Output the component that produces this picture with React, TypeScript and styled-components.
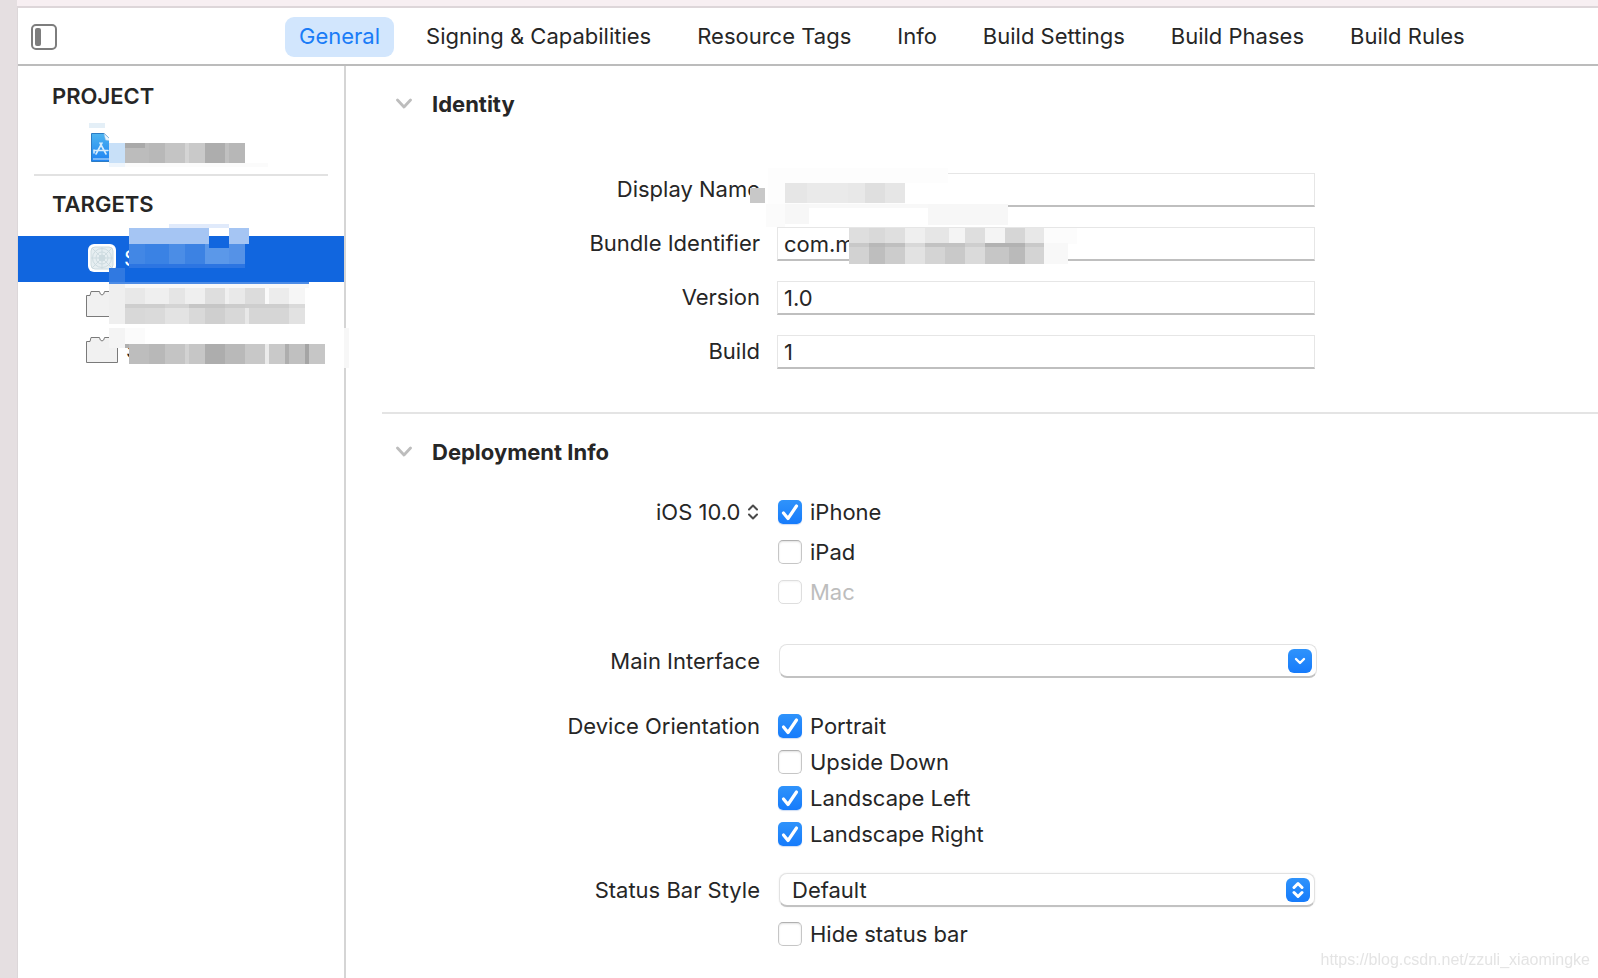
import React, { useState } from 'react';
import styled, { createGlobalStyle } from 'styled-components';

const GlobalStyle = createGlobalStyle`
  * { box-sizing: border-box; }
  body { margin: 0; background: #fff; }
  body, button, input, select {
    font-family: Inter, "Liberation Sans", sans-serif;
    font-size: 22px;
    line-height: 28px;
    color: #262626;
  }
`;

const Frame = styled.div`
  display: flex;
  flex-direction: column;
  min-height: 100vh;
  background: linear-gradient(to right, #e5dfe1 17px, #f7eff2 17px);
  padding: 6px 0 0 17px;
`;

const Window = styled.div`
  flex: 1;
  display: flex;
  flex-direction: column;
  background: #fff;
  border-top: 2px solid #ddd6d9;
  border-left: 1px solid #dcd7d9;
`;

const Toolbar = styled.header`
  display: flex;
  align-items: center;
  height: 58px;
  padding: 2px 13px 0;
  border-bottom: 2px solid #bcbcbc;
`;

const SidebarToggle = styled.button`
  display: flex;
  padding: 0;
  border: 0;
  background: none;
`;

const Tabs = styled.nav`
  display: flex;
  gap: 18px;
  margin-left: 228px;
`;

const Tab = styled.button<{ $active?: boolean }>`
  height: 40px;
  padding: 0 14px 2px;
  border: 0;
  border-radius: 9px;
  white-space: nowrap;
  background: ${p => (p.$active ? '#d2e6fd' : 'transparent')};
  color: ${p => (p.$active ? '#1a7cf7' : '#262626')};
`;

const Body = styled.div`
  flex: 1;
  display: flex;
`;

const Sidebar = styled.aside`
  position: relative;
  flex: none;
  width: 328px;
  padding-top: 16px;
  border-right: 2px solid #d5d5d5;
`;

const GroupTitle = styled.h2`
  margin: 0;
  padding-left: 34px;
  font-size: 22px;
  line-height: 28px;
  font-weight: 600;
`;

const ItemList = styled.ul`
  margin: 0;
  padding: 0;
  list-style: none;
`;

const Item = styled.li<{ $selected?: boolean }>`
  display: flex;
  align-items: center;
  gap: 8px;
  height: 46px;
  padding: 0 0 2px 68px;
  background: ${p => (p.$selected ? '#1166df' : 'transparent')};
  color: ${p => (p.$selected ? '#fff' : '#262626')};
`;

const ProjectGroup = styled.section`
  margin: 0 16px 14px;
  height: 94px;
  border-bottom: 2px solid #e2e2e2;
  ${GroupTitle} { padding-left: 18px; }
  ${Item} { padding: 20px 0 0 52px; height: 56px; }
`;

const TargetGroup = styled.section`
  ${ItemList} { margin-top: 18px; }
`;

const Overlay = styled.svg`
  position: absolute;
  top: 0;
  left: 0;
  overflow: visible;
  pointer-events: none;
`;

const Content = styled.main`
  flex: 1;
  min-width: 0;
`;

const Section = styled.section<{ $divided?: boolean }>`
  margin-left: 36px;
  padding-top: 24px;
  border-top: ${p => (p.$divided ? '2px solid #e4e4e4' : '0')};
`;

const SectionTitle = styled.h2`
  display: flex;
  align-items: center;
  gap: 20px;
  margin: 0;
  padding-left: 14px;
  font-size: 22px;
  line-height: 28px;
  font-weight: 700;
`;

const Disclosure = styled.button`
  display: flex;
  padding: 0;
  border: 0;
  background: none;
`;

const Fields = styled.div`
  position: relative;
  display: flex;
  flex-direction: column;
  gap: 20px;
  margin: 55px 0 43px;
`;

const Row = styled.div`
  display: grid;
  grid-template-columns: 378px minmax(200px, 538px);
  column-gap: 17px;
  align-items: start;
`;

const Label = styled.label<{ $framed?: boolean }>`
  justify-self: end;
  line-height: ${p => (p.$framed ? 32 : 34)}px;
  white-space: nowrap;
`;

const GroupLabel = styled.span`
  justify-self: end;
  line-height: 24px;
  white-space: nowrap;
`;

const TextField = styled.input`
  width: 100%;
  height: 34px;
  padding: 0 6px;
  border: 1px solid #e6e6e6;
  border-bottom: 2px solid #bfbfbf;
  background: #fff;
`;

const Deployment = styled.div`
  display: flex;
  flex-direction: column;
  margin-top: 34px;
`;

const Block = styled.div<{ $space: number }>`
  margin-bottom: ${p => p.$space}px;
`;

const Choices = styled.div<{ $gap: number }>`
  display: flex;
  flex-direction: column;
  align-items: flex-start;
  gap: ${p => p.$gap}px;
  padding-left: 1px;
`;

const Choice = styled.label<{ $disabled?: boolean }>`
  display: flex;
  align-items: center;
  gap: 8px;
  line-height: 24px;
  color: ${p => (p.$disabled ? '#bdbdbd' : '#262626')};
`;

const Box = styled.span`
  display: grid;
  width: 24px;
  height: 24px;
  > * { grid-area: 1 / 1; }
`;

const BoxInput = styled.input`
  appearance: none;
  width: 24px;
  height: 24px;
  margin: 0;
  border: 1px solid #c6c6c6;
  border-top-color: #b0b0b0;
  border-radius: 5px;
  background: #fff;
  box-shadow: inset 0 1px 2px rgba(0, 0, 0, 0.12);
  &:checked {
    border: 0;
    background: linear-gradient(#2f93fb, #167bfb);
    box-shadow: 0 1px 1px rgba(0, 80, 200, 0.2);
  }
  &:disabled { border-color: #dedede; box-shadow: inset 0 1px 2px rgba(0, 0, 0, 0.05); }
`;

const InlineSelect = styled.span`
  display: inline-grid;
  justify-self: end;
  align-items: center;
  > * { grid-area: 1 / 1; }
  > svg { justify-self: end; pointer-events: none; margin-right: 1px; }
`;

const PlainSelect = styled.select`
  appearance: none;
  height: 24px;
  padding: 0 19px 0 0;
  border: 0;
  background: none;
  line-height: 24px;
`;

const Combo = styled.div`
  display: flex;
  align-items: center;
  height: 34px;
  margin: 0 -2px 0 2px;
  padding-right: 4px;
  border: 1px solid #e2e2e2;
  border-bottom: 2px solid #c2c2c2;
  border-radius: 8px;
  background: #fff;
`;

const ComboInput = styled.input`
  flex: 1;
  min-width: 0;
  height: 30px;
  padding: 0 12px;
  border: 0;
  background: none;
  outline: 0;
`;

const ComboButton = styled.button`
  display: grid;
  place-items: center;
  width: 24px;
  height: 24px;
  padding: 0;
  border: 0;
  border-radius: 6px;
  background: linear-gradient(#2f93fb, #167bfb);
`;

const Popup = styled.div`
  display: grid;
  align-items: center;
  height: 34px;
  margin-left: 2px;
  border: 1px solid #e2e2e2;
  border-bottom: 2px solid #c2c2c2;
  border-radius: 8px;
  background: #fff;
  box-shadow: 0 0 2px rgba(0, 0, 0, 0.08);
  > * { grid-area: 1 / 1; }
`;

const PopupSelect = styled.select`
  appearance: none;
  width: 100%;
  height: 30px;
  padding: 0 36px 0 12px;
  border: 0;
  background: none;
`;

const PopupBadge = styled.span`
  display: grid;
  place-items: center;
  justify-self: end;
  width: 24px;
  height: 24px;
  margin-right: 4px;
  border-radius: 6px;
  background: linear-gradient(#2f93fb, #167bfb);
  pointer-events: none;
`;

const Credit = styled.a`
  position: fixed;
  right: 8px;
  bottom: 8px;
  font: 16px/20px "Liberation Sans", sans-serif;
  color: #e4e4e4;
  text-decoration: none;
`;

/* A mosaic cell: x, y, width, height, fill. */
type Cell = [number, number, number, number, string];

/* Builds a strip of cells that share a top and a height from their right edges. */
const strip = (x: number, y: number, h: number, parts: [number, string][]): Cell[] => {
  let from = x;
  return parts.map(([to, fill]) => {
    const cell: Cell = [from, y, to - from, h, fill];
    from = to;
    return cell;
  });
};

const sidebarCells: Cell[] = [
  [71, 57, 16, 5, '#e4eff7'],
  [91, 62, 16, 15, '#ffffff'],
  [91, 77, 16, 20, '#c8e0f8'],
  [91, 97, 16, 4, '#eef5fc'],
  [107, 97, 143, 4, '#fbfbfb'],
  ...strip(107, 77, 20, [[131, '#bcbcbc'], [147, '#b8b8b8'], [167, '#c4c4c4'], [171, '#d4d4d4'], [187, '#c9c9c9'], [207, '#adadad'], [211, '#c0c0c0'], [227, '#b7b7b7']]),
  [107, 77, 20, 5, '#a9a9a9'],
  [151, 158, 60, 4, '#e0eafb'],
  [111, 162, 80, 16, '#a5c5f3'],
  [191, 162, 20, 8, '#ffffff'],
  [211, 162, 20, 16, '#a5c5f3'],
  ...strip(111, 178, 20, [[127, '#4287e5'], [151, '#3a82e4'], [167, '#4b8de6'], [187, '#3c82e3'], [211, '#5b98e9'], [227, '#5592e7']]),
  [191, 170, 20, 12, '#1166df'],
  [111, 198, 116, 4, '#2c75e2'],
  [91, 202, 16, 14, '#3079e1'],
  [91, 216, 200, 2, '#4d8ce6'],
  [91, 218, 16, 40, '#efefef'],
  [107, 218, 184, 4, '#f8f8f8'],
  ...strip(107, 222, 16, [[127, '#e8e8e8'], [151, '#efefef'], [167, '#e5e5e5'], [187, '#efefef'], [207, '#dedede'], [211, '#f0f0f0'], [227, '#e9e9e9'], [247, '#dcdcdc'], [251, '#fafafa'], [271, '#ececec'], [287, '#f6f6f6']]),
  ...strip(107, 238, 20, [[127, '#d8d8d8'], [147, '#dadada'], [171, '#e3e3e3'], [187, '#d9d9d9'], [207, '#cfcfcf'], [227, '#d8d8d8'], [231, '#e8e8e8'], [271, '#d6d6d6'], [287, '#e2e2e2']]),
  ...strip(107, 238, 4, [[147, '#cecece'], [171, '#d4d4d4'], [207, '#c6c6c6'], [227, '#cccccc'], [271, '#cecece'], [287, '#dadada']]),
  [91, 262, 16, 20, '#f4f4f4'],
  [107, 262, 20, 16, '#fbfbfb'],
  [107, 278, 20, 4, '#b0b0b0'],
  ...strip(111, 278, 20, [[131, '#bdbdbd'], [147, '#b8b8b8'], [167, '#c4c4c4'], [171, '#d2d2d2'], [187, '#c6c6c6'], [207, '#adadad'], [227, '#b9b9b9'], [247, '#c8c8c8'], [251, '#ebebeb'], [267, '#c9c9c9'], [271, '#aeaeae'], [287, '#c0c0c0'], [291, '#a5a5a5'], [307, '#c6c6c6']]),
  [326, 262, 5, 40, '#f7f7f7'],
];

const fieldCells: Cell[] = [
  [386, -5, 180, 36, '#fdfdfd'],
  [523, 10, 43, 21, '#ffffff'],
  ...strip(403, 10, 20, [[425, '#e6e6e6'], [466, '#eaeaea'], [483, '#e8e8e8'], [503, '#dfdfdf'], [523, '#e6e6e6']]),
  [368, 15, 15, 15, '#c8c8c8'],
  [384, 31, 19, 23, '#fbfbfb'],
  [403, 31, 24, 20, '#f7f7f7'],
  [427, 31, 119, 4, '#f8f8f8'],
  [427, 35, 119, 18, '#ffffff'],
  [546, 31, 80, 21, '#f7f7f7'],
  ...strip(467, 55, 16, [[487, '#dedede'], [503, '#d9d9d9'], [523, '#dfdfdf'], [543, '#efefef'], [567, '#e6e6e6'], [583, '#f4f4f4'], [603, '#dedede'], [623, '#f4f4f4'], [643, '#d6d6d6'], [662, '#e8e8e8'], [695, '#fcfcfc']]),
  ...strip(467, 70, 21, [[487, '#d2d2d2'], [503, '#bebebe'], [523, '#cccccc'], [543, '#e2e2e2'], [563, '#d4d4d4'], [583, '#c9c9c9'], [603, '#dadada'], [627, '#c6c6c6'], [643, '#bababa'], [662, '#d4d4d4'], [686, '#f8f8f8']]),
  ...strip(467, 70, 4, [[487, '#c8c8c8'], [503, '#b8b8b8'], [523, '#bfbfbf'], [543, '#d8d8d8'], [583, '#c2c2c2'], [603, '#cecece'], [643, '#b2b2b2'], [662, '#c9c9c9']]),
];

const Mosaic = ({ cells }: { cells: Cell[] }) => (
  <Overlay width="1" height="1" shapeRendering="crispEdges" aria-hidden="true">
    {cells.map(([x, y, w, h, fill], i) => (
      <rect key={i} x={x} y={y} width={w} height={h} fill={fill} />
    ))}
  </Overlay>
);

const PanelIcon = () => (
  <svg width="26" height="26" viewBox="0 0 26 26" aria-hidden="true">
    <rect x="1" y="1" width="24" height="24" rx="4" fill="none" stroke="#7d7d7d" strokeWidth="2" />
    <rect x="4" y="4" width="6" height="18" rx="2" fill="#7d7d7d" />
  </svg>
);

const ChevronIcon = () => (
  <svg width="16" height="12" viewBox="0 0 16 12" aria-hidden="true">
    <path d="M1.500 2 8 9l6.500-7" fill="none" stroke="#bdbdbd" strokeWidth="2.800" strokeLinecap="round" strokeLinejoin="round" />
  </svg>
);

const CheckIcon = () => (
  <svg width="24" height="24" viewBox="0 0 24 24" aria-hidden="true" pointerEvents="none">
    <path d="m5.500 13 4.500 5.500L18.500 6" fill="none" stroke="#fff" strokeWidth="3.200" strokeLinecap="round" strokeLinejoin="round" />
  </svg>
);

const UpDownIcon = ({ color, weight }: { color: string; weight: number }) => (
  <svg width="12" height="18" viewBox="0 0 12 18" aria-hidden="true">
    <path d="M2 6.500 6 2.500l4 4M2 11.500l4 4 4-4" fill="none" stroke={color} strokeWidth={weight} strokeLinecap="round" strokeLinejoin="round" />
  </svg>
);

const ProjectIcon = () => (
  <svg width="30" height="32" viewBox="0 0 30 32" aria-hidden="true">
    <defs>
      <linearGradient id="doc" x1="0" y1="0" x2="0" y2="1">
        <stop offset="0" stopColor="#4db4f0" />
        <stop offset="1" stopColor="#1f83f2" />
      </linearGradient>
    </defs>
    <path d="M5.500 1.500H18L26 9v20.500H5.500z" fill="url(#doc)" stroke="#2c7cc4" />
    <path d="M18 1.500 19.500 8 26 9z" fill="#eef6fd" stroke="#9cc4e6" strokeWidth=".6" />
    <path d="M7 27h18" stroke="#cfe7fb" />
    <path d="m10 22 6-11m-2 0 6 11M8 18.500h14M8 18v3" fill="none" stroke="#d6ecfd" strokeWidth="1.600" strokeLinecap="round" />
  </svg>
);

const AppIcon = () => (
  <svg width="30" height="30" viewBox="0 0 30 30" aria-hidden="true">
    <rect x="2" y="1" width="28" height="28" rx="6" fill="#fff" />
    <g fill="none" stroke="#cddbe0">
      <rect x="5" y="4" width="22" height="22" rx="4" fill="#e6eef1" />
      <circle cx="16" cy="15" r="9.500" />
      <circle cx="16" cy="15" r="6" />
      <circle cx="16" cy="15" r="3" fill="#cddbe0" />
      <path d="M5 15h22M16 4v22M6 5l20 20M26 5 6 25" />
    </g>
  </svg>
);

const BrickIcon = () => (
  <svg width="32" height="28" viewBox="0 0 32 28" aria-hidden="true">
    <path d="M.5 5.500h3.500l1-4h8.500l.8 2.500q1.700 2 3.400 0l.8-2.500H27l1 4h3.500v21H.5z" fill="#f1f1f1" stroke="#7a7a7a" strokeLinejoin="round" />
  </svg>
);

const tabs = ['General', 'Signing & Capabilities', 'Resource Tags', 'Info', 'Build Settings', 'Build Phases', 'Build Rules'];

const Check = ({ label, initial, disabled }: { label: string; initial?: boolean; disabled?: boolean }) => {
  const [on, setOn] = useState(!!initial);
  return (
    <Choice $disabled={disabled}>
      <Box>
        <BoxInput type="checkbox" checked={on} disabled={disabled} onChange={() => setOn(!on)} />
        {on && <CheckIcon />}
      </Box>
      {label}
    </Choice>
  );
};

const Field = ({ id, label, value }: { id: string; label: string; value: string }) => (
  <Row>
    <Label $framed htmlFor={id}>{label}</Label>
    <TextField id={id} type="text" defaultValue={value} />
  </Row>
);

export default function App() {
  const [active, setActive] = useState('General');
  return (
    <Frame>
      <GlobalStyle />
      <Window>
        <Toolbar>
          <SidebarToggle type="button" aria-label="Toggle sidebar"><PanelIcon /></SidebarToggle>
          <Tabs>
            {tabs.map(t => (
              <Tab key={t} type="button" $active={t === active} onClick={() => setActive(t)}>{t}</Tab>
            ))}
          </Tabs>
        </Toolbar>
        <Body>
          <Sidebar>
            <ProjectGroup>
              <GroupTitle>PROJECT</GroupTitle>
              <ItemList>
                <Item><ProjectIcon /></Item>
              </ItemList>
            </ProjectGroup>
            <TargetGroup>
              <GroupTitle>TARGETS</GroupTitle>
              <ItemList>
                <Item $selected><AppIcon />S</Item>
                <Item><BrickIcon /></Item>
                <Item><BrickIcon />S</Item>
              </ItemList>
            </TargetGroup>
            <Mosaic cells={sidebarCells} />
          </Sidebar>
          <Content>
            <Section>
              <SectionTitle>
                <Disclosure type="button" aria-label="Collapse Identity"><ChevronIcon /></Disclosure>
                Identity
              </SectionTitle>
              <Fields>
                <Field id="display-name" label="Display Name" value="" />
                <Field id="bundle-id" label="Bundle Identifier" value="com.m" />
                <Field id="version" label="Version" value="1.0" />
                <Field id="build" label="Build" value="1" />
                <Mosaic cells={fieldCells} />
              </Fields>
            </Section>
            <Section $divided>
              <SectionTitle>
                <Disclosure type="button" aria-label="Collapse Deployment Info"><ChevronIcon /></Disclosure>
                Deployment Info
              </SectionTitle>
              <Deployment>
                <Block $space={40}>
                  <Row>
                    <InlineSelect>
                      <PlainSelect aria-label="Deployment target"><option>iOS 10.0</option></PlainSelect>
                      <UpDownIcon color="#4a4a4a" weight={2} />
                    </InlineSelect>
                    <Choices $gap={16}>
                      <Check label="iPhone" initial />
                      <Check label="iPad" />
                      <Check label="Mac" disabled />
                    </Choices>
                  </Row>
                </Block>
                <Block $space={36}>
                  <Row>
                    <Label htmlFor="main-interface">Main Interface</Label>
                    <Combo>
                      <ComboInput id="main-interface" type="text" />
                      <ComboButton type="button" aria-label="Show interfaces">
                        <svg width="12" height="10" viewBox="0 0 12 10" aria-hidden="true">
                          <path d="m2 3 4 4 4-4" fill="none" stroke="#fff" strokeWidth="2.400" strokeLinecap="round" strokeLinejoin="round" />
                        </svg>
                      </ComboButton>
                    </Combo>
                  </Row>
                </Block>
                <Block $space={27}>
                  <Row>
                    <GroupLabel>Device Orientation</GroupLabel>
                    <Choices $gap={12}>
                      <Check label="Portrait" initial />
                      <Check label="Upside Down" />
                      <Check label="Landscape Left" initial />
                      <Check label="Landscape Right" initial />
                    </Choices>
                  </Row>
                </Block>
                <Block $space={15}>
                  <Row>
                    <Label htmlFor="status-style">Status Bar Style</Label>
                    <Popup>
                      <PopupSelect id="status-style"><option>Default</option></PopupSelect>
                      <PopupBadge><UpDownIcon color="#fff" weight={3} /></PopupBadge>
                    </Popup>
                  </Row>
                </Block>
                <Row>
                  <span />
                  <Choices $gap={12}><Check label="Hide status bar" /></Choices>
                </Row>
              </Deployment>
            </Section>
          </Content>
        </Body>
      </Window>
      <Credit href="https://blog.csdn.net/zzuli_xiaomingke">https://blog.csdn.net/zzuli_xiaomingke</Credit>
    </Frame>
  );
}
